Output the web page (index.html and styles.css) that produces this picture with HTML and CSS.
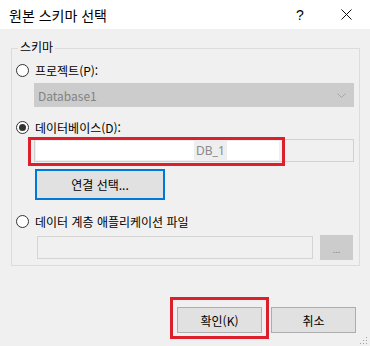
FILE: index.html
```html
<!DOCTYPE html>
<html lang="ko">
<head>
    <meta charset="UTF-8">
    <title>원본 스키마 선택</title>
    <link rel="stylesheet" href="styles.css">
</head>
<body>
    <div class="dialog">
        <div class="titlebar">
            <span class="title">원본 스키마 선택</span>
            <span class="help">?</span>
            <span class="close">
                <svg width="11" height="11" viewBox="0 0 11 11"><path d="M0.5 0.5 L10.5 10.5 M10.5 0.5 L0.5 10.5" stroke="#111" stroke-width="1" fill="none"/></svg>
            </span>
        </div>

        <div class="content">
            <div class="group">
                <span class="legend">스키마</span>

                <label class="option"><span class="radio"></span>프로젝트(P):</label>
                <div class="combo">
                    <span>Database1</span>
                    <svg width="9" height="5" viewBox="0 0 9 5"><path d="M0.5 0.5 L4.5 4.5 L8.5 0.5" stroke="#a6a6a6" fill="none"/></svg>
                </div>

                <label class="option"><span class="radio checked"></span>데이터베이스(D):</label>
                <div class="textbox db">
                    <span class="blank first"></span>
                    <span class="value">DB_1</span>
                    <span class="blank second"></span>
                </div>
                <button class="btn connect">연결 선택...</button>

                <label class="option"><span class="radio"></span>데이터 계층 애플리케이션 파일</label>
                <div class="file-row">
                    <div class="textbox file"></div>
                    <button class="browse">...</button>
                </div>
            </div>

            <div class="actions">
                <button class="btn">확인(K)</button>
                <button class="btn">취소</button>
            </div>
        </div>

        <!-- red markers drawn over the screenshot -->
        <div class="mark mark-db"></div>
        <div class="mark mark-ok"></div>

        <svg class="grip" width="8" height="8" viewBox="0 0 8 8">
            <rect x="6" y="0" width="1" height="1" fill="#a0a0a0"/>
            <rect x="3" y="3" width="1" height="1" fill="#a0a0a0"/>
            <rect x="6" y="3" width="1" height="1" fill="#a0a0a0"/>
            <rect x="0" y="6" width="1" height="1" fill="#a0a0a0"/>
            <rect x="3" y="6" width="1" height="1" fill="#a0a0a0"/>
            <rect x="6" y="6" width="1" height="1" fill="#a0a0a0"/>
        </svg>
    </div>
</body>
</html>
```

FILE: styles.css
```css
* {
    margin: 0;
    padding: 0;
    box-sizing: border-box;
    font-family: "Noto Sans CJK KR", "Noto Sans", sans-serif;
}

body {
    width: 370px;
    height: 346px;
    background: #f0f0f0;
    overflow: hidden;
}

.dialog {
    position: relative;
    width: 370px;
    height: 346px;
}

.titlebar {
    height: 29px;
    background: white;
    display: flex;
    align-items: center;
    padding-left: 9px;
    font-size: 14px;
    color: #000;
}

.title {
    flex: 1;
    line-height: 20px;
}

.help {
    width: 12px;
    text-align: center;
    font-size: 14px;
    margin-right: 35px;
    font-family: "Liberation Sans", sans-serif;
}

.close {
    display: flex;
    width: 11px;
    margin-right: 18px;
}

.content {
    padding: 19px 10px 0 11px;
}

.group {
    position: relative;
    height: 218px;
    border: 1px solid #dcdcdc;
    padding: 11px 5px 0 4px;
}

.legend {
    position: absolute;
    top: -11px;
    left: 6px;
    padding: 0 2px;
    background: #f0f0f0;
    font-size: 12px;
    line-height: 18px;
}

.option {
    display: flex;
    align-items: center;
    height: 20px;
    font-size: 12px;
    color: #000;
}

.radio {
    width: 13px;
    height: 13px;
    border: 1px solid #333;
    border-radius: 50%;
    background: white;
    margin-right: 6px;
    display: flex;
    align-items: center;
    justify-content: center;
}

.radio.checked::after {
    content: "";
    width: 7px;
    height: 7px;
    border-radius: 50%;
    background: #333;
}

.combo {
    margin: 3px 0 0 18px;
    height: 24px;
    background: #cccccc;
    border: 1px solid #cccccc;
    display: flex;
    align-items: center;
    justify-content: space-between;
    padding: 0 7px 0 3px;
    font-family: "Noto Sans", sans-serif;
    font-size: 12px;
    color: #838383;
}

.combo + .option {
    margin-top: 10px;
}

.textbox {
    background: #f0f0f0;
    border: 1px solid #d0d0d0;
}

.textbox.db {
    margin: 2px 0 0 18px;
    height: 23px;
    display: flex;
    align-items: stretch;
    padding: 1px;
}

.blank {
    background: white;
}

.blank.first {
    width: 158px;
}

.blank.second {
    width: 52px;
}

.value {
    width: 33px;
    padding-left: 2px;
    font-family: "Noto Sans", sans-serif;
    font-size: 12px;
    line-height: 19px;
    color: #8a8a8a;
    background: #eeeeee;
}

.btn {
    height: 26px;
    background: #e1e1e1;
    border: 1px solid #adadad;
    font-size: 12px;
    color: #000;
}

.btn.connect {
    display: block;
    margin: 7px 0 0 19px;
    width: 130px;
    height: 31px;
    border: 2px solid #0078d7;
}

.btn.connect + .option {
    margin-top: 11px;
}

.file-row {
    display: flex;
    align-items: center;
    gap: 7px;
    margin: 4px 1px 0 21px;
    height: 25px;
}

.textbox.file {
    flex: 1;
    height: 23px;
    border-color: #d4d4d4;
}

.browse {
    width: 33px;
    height: 25px;
    background: #cccccc;
    border: 1px solid #cccccc;
    color: #8a8a8a;
    font-size: 9px;
    line-height: 14px;
    padding-top: 4px;
}

.actions {
    display: flex;
    justify-content: flex-end;
    gap: 9px;
    margin-top: 41px;
    padding-right: 4px;
}

.actions .btn {
    width: 85px;
}

.mark {
    position: absolute;
    border: 3px solid #dc1f2b;
}

.mark-db {
    left: 28px;
    top: 137px;
    width: 257px;
    height: 29px;
}

.mark-ok {
    left: 170px;
    top: 297px;
    width: 99px;
    height: 42px;
}

.grip {
    position: absolute;
    right: 2px;
    bottom: 1px;
}
```
